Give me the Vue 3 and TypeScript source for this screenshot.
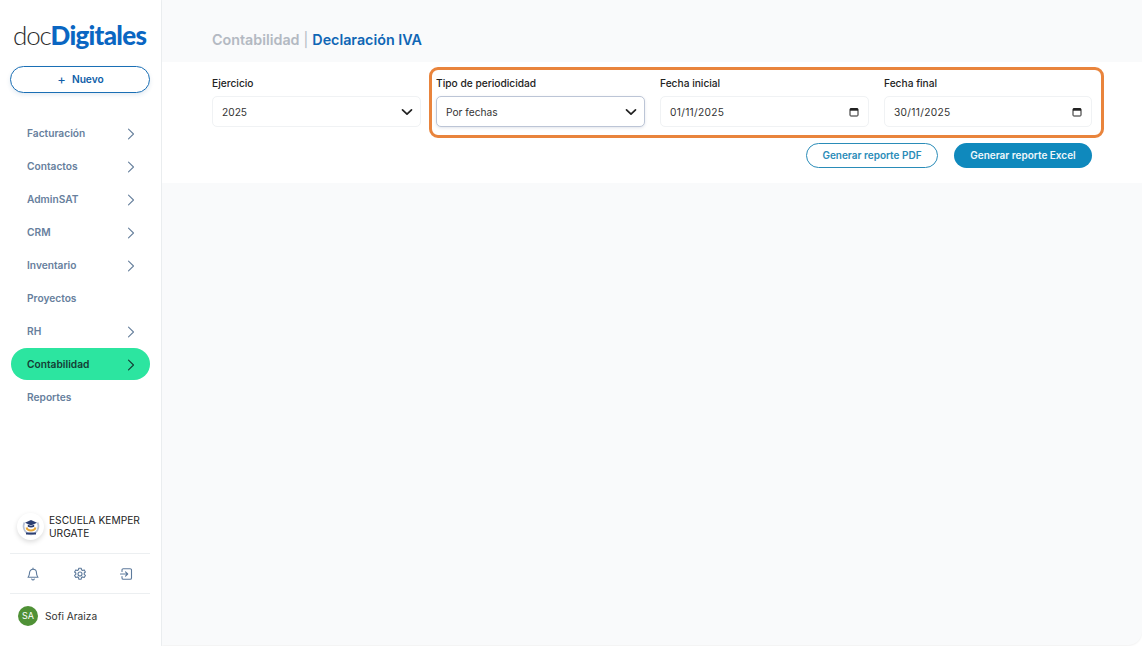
<script setup lang="ts">
const navItems = [
  { label: 'Facturación', arrow: true },
  { label: 'Contactos', arrow: true },
  { label: 'AdminSAT', arrow: true },
  { label: 'CRM', arrow: true },
  { label: 'Inventario', arrow: true },
  { label: 'Proyectos', arrow: false },
  { label: 'RH', arrow: true },
  { label: 'Contabilidad', arrow: true, active: true },
  { label: 'Reportes', arrow: false },
]

const dateFields = [
  { label: 'Fecha inicial', value: '01/11/2025' },
  { label: 'Fecha final', value: '30/11/2025' },
]
</script>

<template>
  <div class="page">
    <aside class="sidebar">
      <div class="logo"><span class="logo__doc">doc</span><span class="logo__brand">Digitales</span></div>
      <button class="new-btn"><span class="new-btn__plus">+</span> Nuevo</button>

      <nav class="nav">
        <a
          v-for="item in navItems"
          :key="item.label"
          class="nav__item"
          :class="{ 'nav__item--active': item.active }"
        >
          <span>{{ item.label }}</span>
          <svg v-if="item.arrow" class="nav__arrow" width="8" height="12" viewBox="0 0 8 12" fill="none">
            <path d="M1.500 1.200l5 4.800-5 4.800" stroke="currentColor" stroke-width="1.100" stroke-linecap="round" stroke-linejoin="round" />
          </svg>
        </a>
      </nav>

      <div class="company">
        <div class="company__logo">
          <svg width="20" height="20" viewBox="0 0 20 20" fill="none">
            <path d="M3.500 5.500C1 10 3.500 16.500 10 17.500c6.500-1 9-7.500 6.500-12" stroke="#b9c3d6" stroke-width="1.600" />
            <path d="M5.500 10.500c1 4 8 4 9 0" stroke="#e8a93a" stroke-width="2" />
            <path d="M10 3l6 2.800-6 2.800-6-2.800z" fill="#2c3f73" />
            <path d="M6.800 7.500v2.300c2 1 4.400 1 6.400 0V7.500L10 9z" fill="#2c3f73" />
            <rect x="5" y="15.500" width="10" height="2" fill="#2c3f73" />
          </svg>
        </div>
        <span class="company__name">ESCUELA KEMPER URGATE</span>
      </div>

      <div class="tools">
        <svg width="14" height="14" viewBox="0 0 14 14" fill="none" stroke="#5d7a9c" stroke-width="1.100" stroke-linecap="round" stroke-linejoin="round">
          <path d="M3.500 6c0-2.200 1.500-3.800 3.500-3.800S10.500 3.800 10.500 6c0 2.700 1 3.600 1.500 4.300H2C2.500 9.600 3.500 8.700 3.500 6z" />
          <path d="M7 1v1.200M5.700 12c.3.600.8.900 1.300.9s1-.3 1.300-.9" />
        </svg>
        <svg width="14" height="14" viewBox="0 0 14 14" fill="none" stroke="#5d7a9c" stroke-width="1.100" stroke-linejoin="round">
          <path d="M5.800 1.200h2.400l.3 1.600 1.200.7 1.500-.6 1.200 2.100-1.200 1 0 1.400 1.200 1-1.200 2.100-1.500-.6-1.200.7-.3 1.600H5.800l-.3-1.600-1.200-.7-1.500.6-1.200-2.100 1.200-1 0-1.400-1.200-1 1.200-2.100 1.500.6 1.200-.7z" />
          <circle cx="7" cy="7" r="2" />
        </svg>
        <svg width="14" height="14" viewBox="0 0 14 14" fill="none" stroke="#5d7a9c" stroke-width="1.100" stroke-linecap="round" stroke-linejoin="round">
          <path d="M3 4.500V3a1.300 1.300 0 0 1 1.300-1.300h6.900A1.300 1.300 0 0 1 12.500 3v8a1.300 1.300 0 0 1-1.300 1.300H4.300A1.300 1.300 0 0 1 3 11V9.500" />
          <path d="M1.500 7h7M6.500 4.800L8.700 7 6.500 9.200" />
        </svg>
      </div>

      <div class="user">
        <span class="user__avatar">SA</span>
        <span class="user__name">Sofi Araiza</span>
      </div>
    </aside>

    <main class="main">
      <h1 class="title">
        <span class="title__section">Contabilidad</span>
        <span class="title__sep"> | </span>
        <span class="title__page">Declaración IVA</span>
      </h1>

      <section class="panel">
        <div class="filters">
          <div class="field">
            <label class="field__label">Ejercicio</label>
            <div class="field__control">
              <span>2025</span>
              <svg width="12" height="8" viewBox="0 0 12 8" fill="none"><path d="M1.500 1.800L6 6.200l4.500-4.400" stroke="#222" stroke-width="1.700" stroke-linecap="round" stroke-linejoin="round" /></svg>
            </div>
          </div>
          <div class="field">
            <label class="field__label">Tipo de periodicidad</label>
            <div class="field__control field__control--focus">
              <span>Por fechas</span>
              <svg width="12" height="8" viewBox="0 0 12 8" fill="none"><path d="M1.500 1.800L6 6.200l4.500-4.400" stroke="#222" stroke-width="1.700" stroke-linecap="round" stroke-linejoin="round" /></svg>
            </div>
          </div>
          <div v-for="field in dateFields" :key="field.label" class="field">
            <label class="field__label">{{ field.label }}</label>
            <div class="field__control field__control--date">
              <span>{{ field.value }}</span>
              <svg width="10" height="10" viewBox="0 0 10 10" fill="none">
                <rect x="1" y="1.500" width="8" height="7.500" rx="0.800" stroke="#222" stroke-width="1" />
                <rect x="1" y="1.500" width="8" height="2.200" fill="#222" />
              </svg>
            </div>
          </div>
          <div class="highlight"></div>
        </div>

        <div class="actions">
          <button class="btn btn--outline">Generar reporte PDF</button>
          <button class="btn btn--solid">Generar reporte Excel</button>
        </div>
      </section>
    </main>
  </div>
</template>

<style>
html,
body {
  margin: 0;
  background: #fff;
}
</style>

<style scoped>
.page {
  display: flex;
  width: 1142px;
  height: 646px;
  overflow: hidden;
  font-family: Inter, "Liberation Sans", sans-serif;
  color: #222;
  background: #fff;
}

.sidebar {
  display: flex;
  flex-direction: column;
  flex: none;
  box-sizing: border-box;
  width: 162px;
  height: 646px;
  padding: 0 11px 0 10px;
  border-right: 1px solid #edf0f2;
  background: #fff;
}

.logo {
  margin: 17px 0 0 3px;
  height: 36px;
  font-size: 26px;
  line-height: 36px;
  white-space: nowrap;
}

.logo__doc {
  font-family: Lato, sans-serif;
  font-weight: 300;
  letter-spacing: -1.200px;
  color: #2b2b2b;
}

.logo__brand {
  font-family: Lato, sans-serif;
  font-weight: 900;
  letter-spacing: -0.700px;
  color: #0a66c2;
}

.new-btn {
  display: flex;
  align-items: center;
  justify-content: center;
  gap: 6px;
  box-sizing: border-box;
  width: 140px;
  height: 27px;
  margin-top: 13px;
  padding: 0 0 2px 1px;
  border: 1px solid #1a6fb5;
  border-radius: 14px;
  background: #fff;
  box-shadow: 0 2px 4px rgba(30, 90, 150, 0.12);
  color: #0f5ea8;
  font-family: inherit;
  font-size: 10.200px;
  line-height: 14px;
  font-weight: 600;
}

.new-btn__plus {
  font-size: 13px;
  line-height: 14px;
  font-weight: 400;
}

.nav {
  display: flex;
  flex-direction: column;
  gap: 1px;
  margin: 24px 0 0 1px;
}

.nav__item {
  display: flex;
  align-items: center;
  justify-content: space-between;
  box-sizing: border-box;
  width: 139px;
  height: 32px;
  padding: 0 15px 0 16px;
  border-radius: 16px;
  color: #67809d;
  font-size: 10.200px;
  font-weight: 600;
}

.nav__item--active {
  background: #2ce5a0;
  color: #143c34;
}

.nav__arrow {
  margin-top: 2px;
}

.company {
  display: flex;
  align-items: center;
  gap: 5px;
  margin-top: auto;
  margin-bottom: 3px;
  padding: 0 7px 7px;
  height: 33px;
}

.company__logo {
  display: flex;
  align-items: center;
  justify-content: center;
  flex: none;
  width: 27px;
  height: 27px;
  border-radius: 50%;
  background: #fff;
  box-shadow: 0 2px 5px rgba(0, 0, 0, 0.14);
}

.company__name {
  font-size: 10.200px;
  line-height: 13px;
  color: #222;
}

.tools {
  display: flex;
  align-items: center;
  justify-content: space-between;
  box-sizing: border-box;
  height: 41px;
  padding: 0 17px 0 16px;
  border-top: 1px solid #eceff1;
  border-bottom: 1px solid #eceff1;
  width: 140px;
}

.user {
  display: flex;
  align-items: center;
  gap: 7px;
  height: 43px;
  margin-bottom: 9px;
  padding-left: 8px;
}

.user__avatar {
  display: flex;
  align-items: center;
  justify-content: center;
  width: 20px;
  height: 20px;
  border-radius: 50%;
  background: #4f9136;
  color: #fff;
  font-size: 9px;
}

.user__name {
  font-size: 10.200px;
  color: #333;
}

.main {
  flex: 1;
  margin-bottom: 1px;
  background: #f9fafb;
  border-radius: 0 0 14px 0;
  box-shadow: 0 1px 2px rgba(0, 0, 0, 0.06);
}

.title {
  margin: 0;
  padding: 30px 0 0 50px;
  height: 32px;
  font-size: 14.300px;
  line-height: 20px;
  font-weight: 600;
}

.title__section,
.title__sep {
  color: #b3b9c2;
}

.title__sep {
  font-weight: 400;
}

.title__page {
  color: #0f66b5;
}

.panel {
  box-sizing: border-box;
  height: 121px;
  padding: 15px 50px 0;
  background: #fff;
}

.filters {
  position: relative;
  display: grid;
  grid-template-columns: 209px 209px 209px 208px;
  column-gap: 15px;
}

.field__label {
  display: block;
  height: 19px;
  font-size: 10.200px;
  line-height: 13px;
  font-weight: 500;
  color: #222;
}

.field__control {
  display: flex;
  align-items: center;
  justify-content: space-between;
  box-sizing: border-box;
  height: 31px;
  padding: 0 7px 0 9px;
  border: 1px solid #f0f2f4;
  border-radius: 5px;
  background: #fff;
  font-size: 10.200px;
  color: #333;
}

.field__control--focus {
  border-color: #bcc5d6;
  box-shadow: 0 1px 3px rgba(60, 80, 120, 0.15);
}

.field__control--date {
  padding-right: 9px;
  letter-spacing: 0.300px;
}

.highlight {
  position: absolute;
  left: 217px;
  top: -10px;
  width: 669px;
  height: 65px;
  border: 3px solid #e9843c;
  border-radius: 9px;
  pointer-events: none;
}

.actions {
  display: flex;
  justify-content: flex-end;
  gap: 16px;
  margin-top: 16px;
}

.btn {
  box-sizing: border-box;
  height: 25px;
  padding: 0 0 2px;
  border-radius: 13px;
  font-family: inherit;
  font-size: 10px;
  font-weight: 600;
}

.btn--outline {
  width: 132px;
  border: 1px solid #2a8cb8;
  background: #fff;
  color: #2a8cb8;
}

.btn--solid {
  width: 138px;
  border: none;
  background: #0f89bd;
  color: #eef7fb;
}
</style>
